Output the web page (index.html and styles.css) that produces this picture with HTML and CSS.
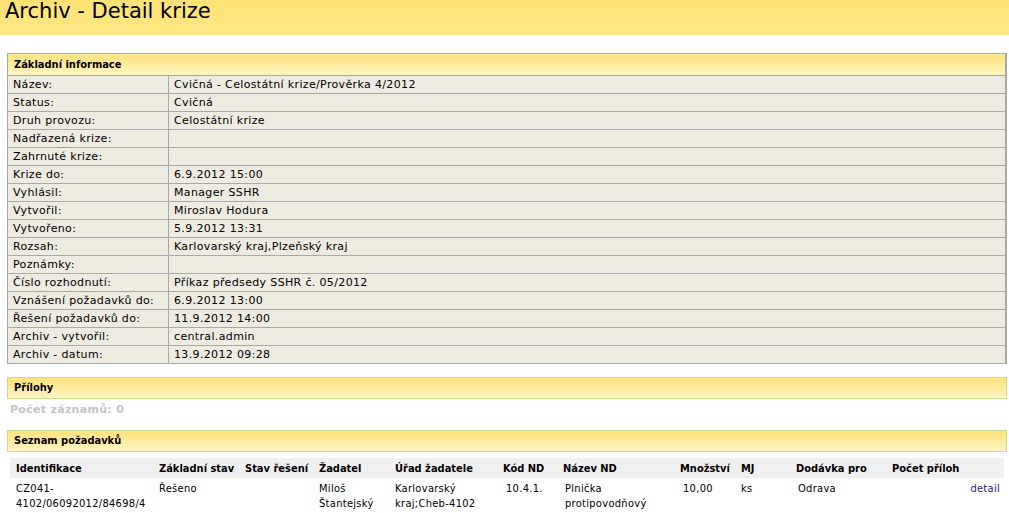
FILE: index.html
```html
<!DOCTYPE html>
<html>
<head>
<meta charset="utf-8">
<title>Archiv - Detail krize</title>
<link rel="stylesheet" href="styles.css">
</head>
<body>
  <div class="page-head">
    <h1>Archiv - Detail krize</h1>
  </div>

  <div class="content">
    <table class="info">
      <tr><th colspan="2">Základní informace</th></tr>
      <tr><td class="label">Název:</td><td>Cvičná - Celostátní krize/Prověrka 4/2012</td></tr>
      <tr><td class="label">Status:</td><td>Cvičná</td></tr>
      <tr><td class="label">Druh provozu:</td><td>Celostátní krize</td></tr>
      <tr><td class="label">Nadřazená krize:</td><td></td></tr>
      <tr><td class="label">Zahrnuté krize:</td><td></td></tr>
      <tr><td class="label">Krize do:</td><td>6.9.2012 15:00</td></tr>
      <tr><td class="label">Vyhlásil:</td><td>Manager SSHR</td></tr>
      <tr><td class="label">Vytvořil:</td><td>Miroslav Hodura</td></tr>
      <tr><td class="label">Vytvořeno:</td><td>5.9.2012 13:31</td></tr>
      <tr><td class="label">Rozsah:</td><td>Karlovarský kraj,Plzeňský kraj</td></tr>
      <tr><td class="label">Poznámky:</td><td></td></tr>
      <tr><td class="label">Číslo rozhodnutí:</td><td>Příkaz předsedy SSHR č. 05/2012</td></tr>
      <tr><td class="label">Vznášení požadavků do:</td><td>6.9.2012 13:00</td></tr>
      <tr><td class="label">Řešení požadavků do:</td><td>11.9.2012 14:00</td></tr>
      <tr><td class="label">Archiv - vytvořil:</td><td>central.admin</td></tr>
      <tr><td class="label">Archiv - datum:</td><td>13.9.2012 09:28</td></tr>
    </table>

    <div class="section-bar">Přílohy</div>
    <div class="count">Počet záznamů: 0</div>

    <div class="section-bar">Seznam požadavků</div>
    <table class="list">
      <colgroup>
        <col style="width:143px"><col style="width:86px"><col style="width:74px"><col style="width:76px">
        <col style="width:108px"><col style="width:60px"><col style="width:117px"><col style="width:61px">
        <col style="width:55px"><col style="width:96px"><col style="width:74px"><col>
      </colgroup>
      <tr class="head">
        <th>Identifikace</th>
        <th>Základní stav</th>
        <th>Stav řešení</th>
        <th>Žadatel</th>
        <th>Úřad žadatele</th>
        <th>Kód ND</th>
        <th>Název ND</th>
        <th>Množství</th>
        <th>MJ</th>
        <th>Dodávka pro</th>
        <th>Počet příloh</th>
        <th></th>
      </tr>
      <tr>
        <td>CZ041-<br>4102/06092012/84698/4</td>
        <td>Řešeno</td>
        <td></td>
        <td>Miloš<br>Štantejský</td>
        <td>Karlovarský<br>kraj;Cheb-4102</td>
        <td class="num">10.4.1.</td>
        <td class="name">Plnička<br>protipovodňový<br>pytlů</td>
        <td class="num">10,00</td>
        <td>ks</td>
        <td class="name">Odrava</td>
        <td></td>
        <td class="action"><a href="#">detail</a></td>
      </tr>
    </table>
  </div>
</body>
</html>
```

FILE: styles.css
```css
body
{
  margin: 0;
  font-family: "DejaVu Sans", Verdana, sans-serif;
  font-size: 11px;
  color: #000;
  background: #fff;
}

.page-head /* yellow title band */
{
  height: 35px;
  background: linear-gradient(#ffe274, #ffe788);
}

.page-head h1
{
  margin: 0;
  padding: 0 5px;
  font-family: "DejaVu Sans", Tahoma, sans-serif;
  font-weight: normal;
  font-size: 21px;
  line-height: 23px;
}

.content
{
  padding: 18px 2px 0 7px;
}

/* basic info table */

table.info
{
  width: 1000px;
  border-collapse: collapse;
  border: 1px solid #a9a9a9;
  border-right-width: 2px;
  font-size: 11px;
}

table.info th
{
  height: 21px;
  padding: 0 6px;
  text-align: left;
  font-weight: bold;
  font-family: "DejaVu Sans Condensed", Tahoma, sans-serif;
  background: linear-gradient(#ffe27a, #fff4c6);
  border-bottom: 1px solid #a9a9a9;
}

table.info td
{
  height: 17px;
  padding: 0 5px;
  letter-spacing: 0.35px;
  background: #eeebe0;
  border-top: 1px solid #a9a9a9;
  border-left: 1px solid #a9a9a9;
  white-space: nowrap;
}

table.info td.label
{
  width: 150px;
}

/* section bars */

.section-bar
{
  width: 986px;
  height: 20px;
  line-height: 20px;
  margin-top: 13px;
  padding: 0 6px;
  font-family: "DejaVu Sans Condensed", Tahoma, sans-serif;
  font-weight: bold;
  background: linear-gradient(#ffe27a, #fff4c6);
  border: 1px solid #c9dc8f;
}

.count
{
  padding: 4px 3px 0 3px;
  height: 27px;
  font-weight: bold;
  letter-spacing: 0.3px;
  color: #c4c4c4;
}

.count + .section-bar
{
  margin-top: 0;
}

/* list of requests */

table.list
{
  margin: 6px 0 0 3px;
  width: 994px;
  table-layout: fixed;
  border-collapse: collapse;
  font-family: "DejaVu Sans Condensed", Tahoma, sans-serif;
  font-size: 11px;
}

table.list tr.head th
{
  height: 20px;
  padding: 0 6px;
  text-align: left;
  white-space: nowrap;
  font-weight: bold;
  background: #f0f0f0;
}

table.list td
{
  padding: 3px 6px 0 6px;
  vertical-align: top;
  line-height: 15px;
  letter-spacing: 0.3px;
  white-space: nowrap;
}

table.list td.num
{
  padding-left: 9px;
}

table.list td.name
{
  padding-left: 8px;
}

table.list td.action
{
  text-align: right;
  padding-right: 4px;
}

table.list a
{
  color: #1c1c7c;
  text-decoration: none;
}
```
